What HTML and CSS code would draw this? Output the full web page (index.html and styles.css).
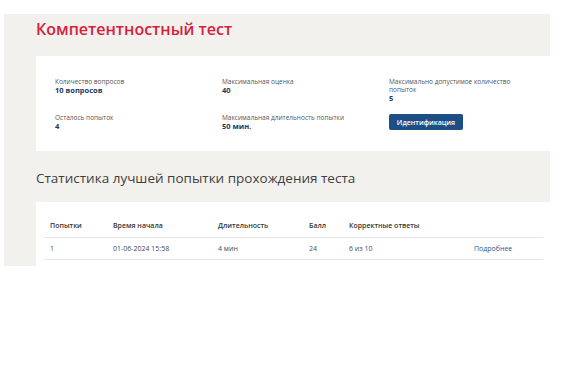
FILE: index.html
```html
<!DOCTYPE html>
<html lang="ru">
<head>
    <meta charset="UTF-8">
    <meta name="viewport" content="width=device-width, initial-scale=1.0">
    <title>Компетентностный тест</title>
    <link rel="stylesheet" href="styles.css">
</head>
<body>
    <div class="page">
        <div class="section">
            <h1 class="test-title">Компетентностный тест</h1>
            <div class="card info-card">
                <div class="info-item">
                    <div class="info-label">Количество вопросов</div>
                    <div class="info-value">10 вопросов</div>
                </div>
                <div class="info-item">
                    <div class="info-label">Максимальная оценка</div>
                    <div class="info-value">40</div>
                </div>
                <div class="info-item">
                    <div class="info-label">Максимально допустимое количество попыток</div>
                    <div class="info-value">5</div>
                </div>
                <div class="info-item">
                    <div class="info-label">Осталось попыток</div>
                    <div class="info-value">4</div>
                </div>
                <div class="info-item">
                    <div class="info-label">Максимальная длительность попытки</div>
                    <div class="info-value">50 мин.</div>
                </div>
                <div class="info-item">
                    <button class="btn-primary">Идентификация</button>
                </div>
            </div>
            <h2 class="stats-title">Статистика лучшей попытки прохождения теста</h2>
            <div class="card table-card">
                <table class="stats-table">
                    <thead>
                        <tr>
                            <th class="col-num">Попытки</th>
                            <th class="col-start">Время начала</th>
                            <th class="col-dur">Длительность</th>
                            <th class="col-score">Балл</th>
                            <th class="col-correct">Корректные ответы</th>
                            <th class="col-more"></th>
                        </tr>
                    </thead>
                    <tbody>
                        <tr>
                            <td>1</td>
                            <td>01-06-2024 15:58</td>
                            <td>4 мин</td>
                            <td>24</td>
                            <td>6 из 10</td>
                            <td><a href="#" class="more-link">Подробнее</a></td>
                        </tr>
                    </tbody>
                </table>
            </div>
        </div>
    </div>
</body>
</html>
```

FILE: styles.css
```css
body {
    margin: 0;
    font-family: "Open Sans", Arial, sans-serif;
    background-color: #fff;
    color: #333;
}
.page {
    padding: 14px 19px 0 4px;
}
.section {
    background-color: #f2f1ee;
    padding-left: 32px;
}
.test-title {
    margin: 0;
    height: 42px;
    line-height: 31px;
    font-size: 16px;
    font-weight: 600;
    color: #d5213c;
}
.card {
    background-color: #fff;
}
.info-card {
    display: grid;
    grid-template-columns: 167px 167px 140px;
    align-items: start;
    row-gap: 11px;
    padding: 22px 0 20px 19px;
}
.info-label {
    font-size: 6.5px;
    line-height: 8px;
    color: #555;
}
.info-value {
    font-size: 7.5px;
    line-height: 9px;
    font-weight: 700;
    color: #213a5e;
}
.btn-primary {
    display: block;
    background-color: #1d4f86;
    color: white;
    border: none;
    border-radius: 2px;
    height: 16px;
    width: 74px;
    padding: 0;
    font-family: "Open Sans", Arial, sans-serif;
    font-size: 7px;
    font-weight: 600;
    cursor: pointer;
}
.stats-title {
    margin: 0;
    height: 51px;
    line-height: 54px;
    font-size: 13.5px;
    font-weight: 400;
    color: #3f3f3f;
}
.table-card {
    padding: 13px 7px 6px 8px;
}
.stats-table {
    width: 100%;
    border-collapse: collapse;
    table-layout: fixed;
    font-size: 7px;
}
.stats-table th,
.stats-table td {
    box-sizing: border-box;
    text-align: left;
    height: 22px;
    padding: 0 6px;
    border-bottom: 1px solid #e6e6e6;
}
.stats-table th {
    font-weight: 600;
    color: #333;
}
.stats-table td {
    color: #4a4a4a;
}
.col-num { width: 63px; }
.col-start { width: 105px; }
.col-dur { width: 91px; }
.col-score { width: 40px; }
.col-correct { width: 125px; }
.more-link {
    color: #2c5b8c;
    text-decoration: none;
}
```
